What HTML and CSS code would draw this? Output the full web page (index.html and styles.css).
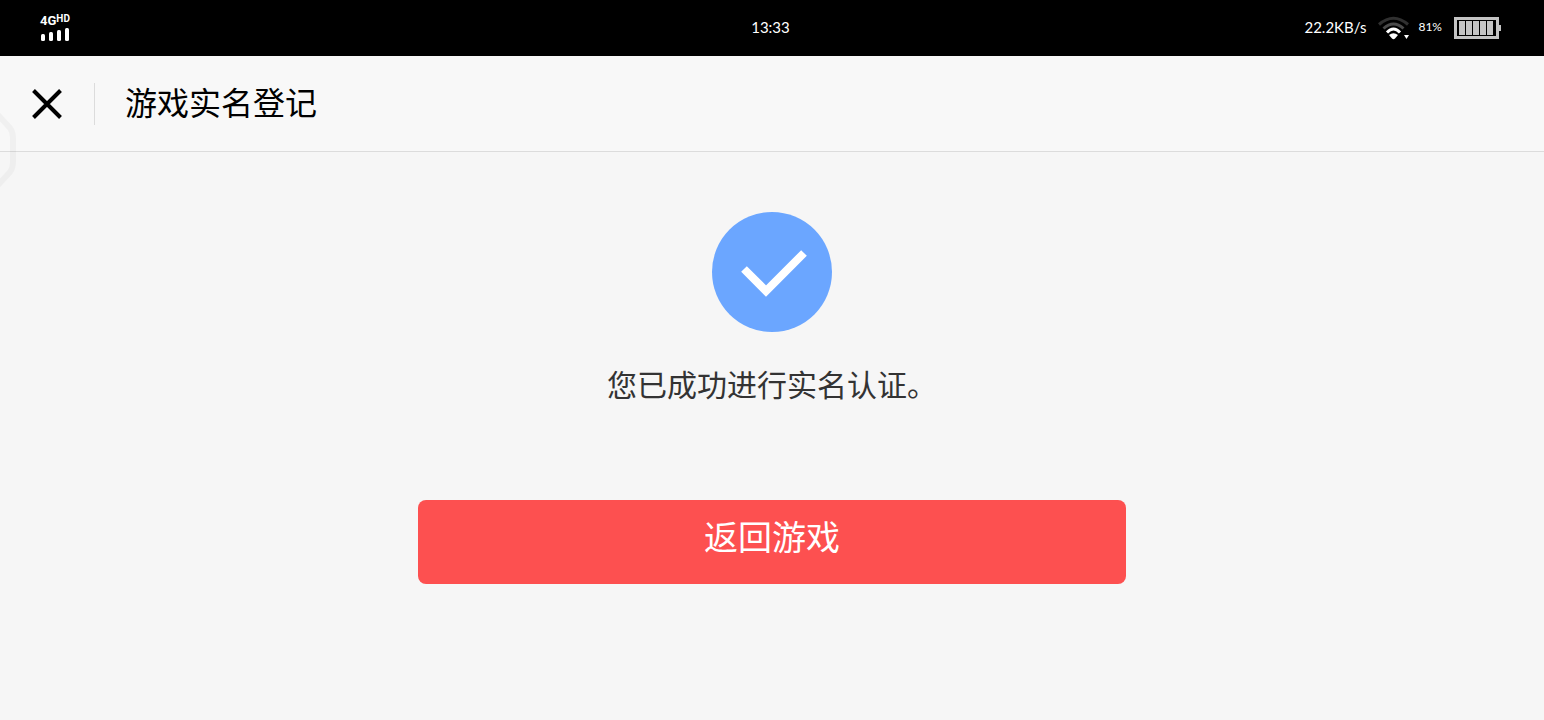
FILE: index.html
```html
<!DOCTYPE html>
<html lang="zh-CN">
<head>
<meta charset="utf-8">
<meta name="viewport" content="width=device-width, initial-scale=1">
<title>游戏实名登记</title>
<link rel="stylesheet" href="styles.css">
</head>
<body>
<div class="status-bar">
  <div class="network">
    <div class="network-type"><span>4G</span><span class="network-hd">HD</span></div>
    <svg class="signal" viewBox="0 0 30 14" aria-hidden="true">
      <g fill="#fff"><rect x="1" y="7" width="4" height="7" rx="1.5"/><rect x="9" y="5" width="4" height="9" rx="1.5"/><rect x="17" y="3" width="4" height="11" rx="1.5"/><rect x="25" y="1" width="4" height="13" rx="1.5"/></g>
    </svg>
  </div>
  <time class="clock">13:33</time>
  <div class="indicators">
    <span class="speed">22.2KB/s</span>
    <svg class="wifi" viewBox="0 0 32 24" aria-hidden="true">
      <g fill="none" stroke-width="3">
        <path d="M1 8.500Q15.500-4 30 8.500" stroke="#303030"/>
        <path d="M5.500 12.500Q15.500 3.500 25.500 12.500" stroke="#4a4a4a"/>
        <path d="M9 16.500Q15.500 9.500 22 16.500" stroke="#fff"/>
      </g>
      <path d="M11 19Q15.500 15.500 20 19L17 22.500Q15.500 24 14 22.500Z" fill="#fff"/>
      <path d="M26 19h5l-2.500 4z" fill="#fff"/>
    </svg>
    <span class="percent">81%</span>
    <svg class="battery" viewBox="0 0 47 22" aria-hidden="true">
      <rect x="1.500" y="1.500" width="42" height="19" fill="#000" stroke="#c4c4c4" stroke-width="3"/>
      <rect x="45" y="8" width="2" height="6" fill="#c4c4c4"/>
      <g fill="#c4c4c4"><rect x="5" y="4" width="6" height="14"/><rect x="12" y="4" width="6" height="14"/><rect x="19" y="4" width="6" height="14"/><rect x="26" y="4" width="6" height="14"/><rect x="33" y="4" width="6" height="14"/></g>
    </svg>
  </div>
</div>
<header class="header">
  <button class="close" type="button" aria-label="关闭">
    <svg viewBox="0 0 30 30" aria-hidden="true"><path d="M1.500 1.500l27 27M28.500 1.500l-27 27" stroke="#000" stroke-width="4"/></svg>
  </button>
  <h1 class="title">游戏实名登记</h1>
</header>
<svg class="float-handle" viewBox="0 0 18 84" aria-hidden="true">
  <path d="M-2 7L10 20Q13 24 13 30V54Q13 60 10 64L-2 77" fill="none" stroke="#000" stroke-opacity=".03" stroke-width="6"/>
</svg>
<main class="result">
  <svg class="success" viewBox="0 0 120 120" aria-hidden="true">
    <circle cx="60" cy="60" r="60" fill="#6ba6ff"/>
    <path d="M32 57L54 79L92 41" fill="none" stroke="#fff" stroke-width="8"/>
  </svg>
  <p class="message">您已成功进行实名认证。</p>
  <button class="return" type="button">返回游戏</button>
</main>
</body>
</html>
```
FILE: styles.css
```css
* {
  box-sizing: border-box;
}

body {
  margin: 0;
  min-height: 100vh;
  background: #f6f6f6;
  color: #000;
  font-family: "Liberation Sans", "Noto Sans CJK SC", sans-serif;
}

button {
  border: 0;
  padding: 0;
  font: inherit;
  cursor: pointer;
}

svg {
  display: block;
}

.status-bar {
  display: grid;
  grid-template-columns: 1fr auto 1fr;
  align-items: center;
  height: 56px;
  padding: 0 43px 0 40px;
  background: #000;
  color: #fff;
  font-family: Lato, sans-serif;
  font-size: 15px;
  line-height: 20px;
}

.clock,
.speed,
.percent {
  padding-bottom: 2px;
}

.network-type {
  display: flex;
  align-items: flex-start;
  font-family: Roboto, sans-serif;
  font-size: 13px;
  font-weight: 700;
  line-height: 12px;
}

.network-hd {
  font-size: 10px;
  line-height: 8px;
}

.signal {
  width: 30px;
  height: 14px;
}

.indicators {
  display: flex;
  align-items: center;
  justify-content: flex-end;
  gap: 12px;
}

.wifi {
  width: 32px;
  height: 24px;
}

.percent {
  margin-left: -4px;
  font-size: 12px;
}

.battery {
  width: 47px;
  height: 22px;
}

.header {
  display: flex;
  align-items: center;
  height: 96px;
  padding: 0 32px;
  border-bottom: 1px solid #dcdcdc;
  background: #f8f8f8;
}

.close {
  background: none;
}

.close svg {
  width: 30px;
  height: 30px;
}

.title {
  margin: 0 0 0 32px;
  padding-left: 30px;
  border-left: 1px solid #dcdcdc;
  font-size: 32px;
  font-weight: 400;
  line-height: 42px;
}

.float-handle {
  position: absolute;
  top: 108px;
  left: 0;
  width: 18px;
  height: 84px;
  pointer-events: none;
}

.result {
  display: flex;
  flex-direction: column;
  align-items: center;
  padding: 60px 24px;
}

.success {
  width: 120px;
  height: 120px;
}

.message {
  margin: 32px 0 92px;
  color: #333;
  font-size: 30px;
  line-height: 44px;
}

.return {
  width: 100%;
  max-width: 708px;
  padding: 16px 0 24px;
  border-radius: 8px;
  background: #fd5050;
  color: #fff;
  font-size: 34px;
  line-height: 44px;
}
```
